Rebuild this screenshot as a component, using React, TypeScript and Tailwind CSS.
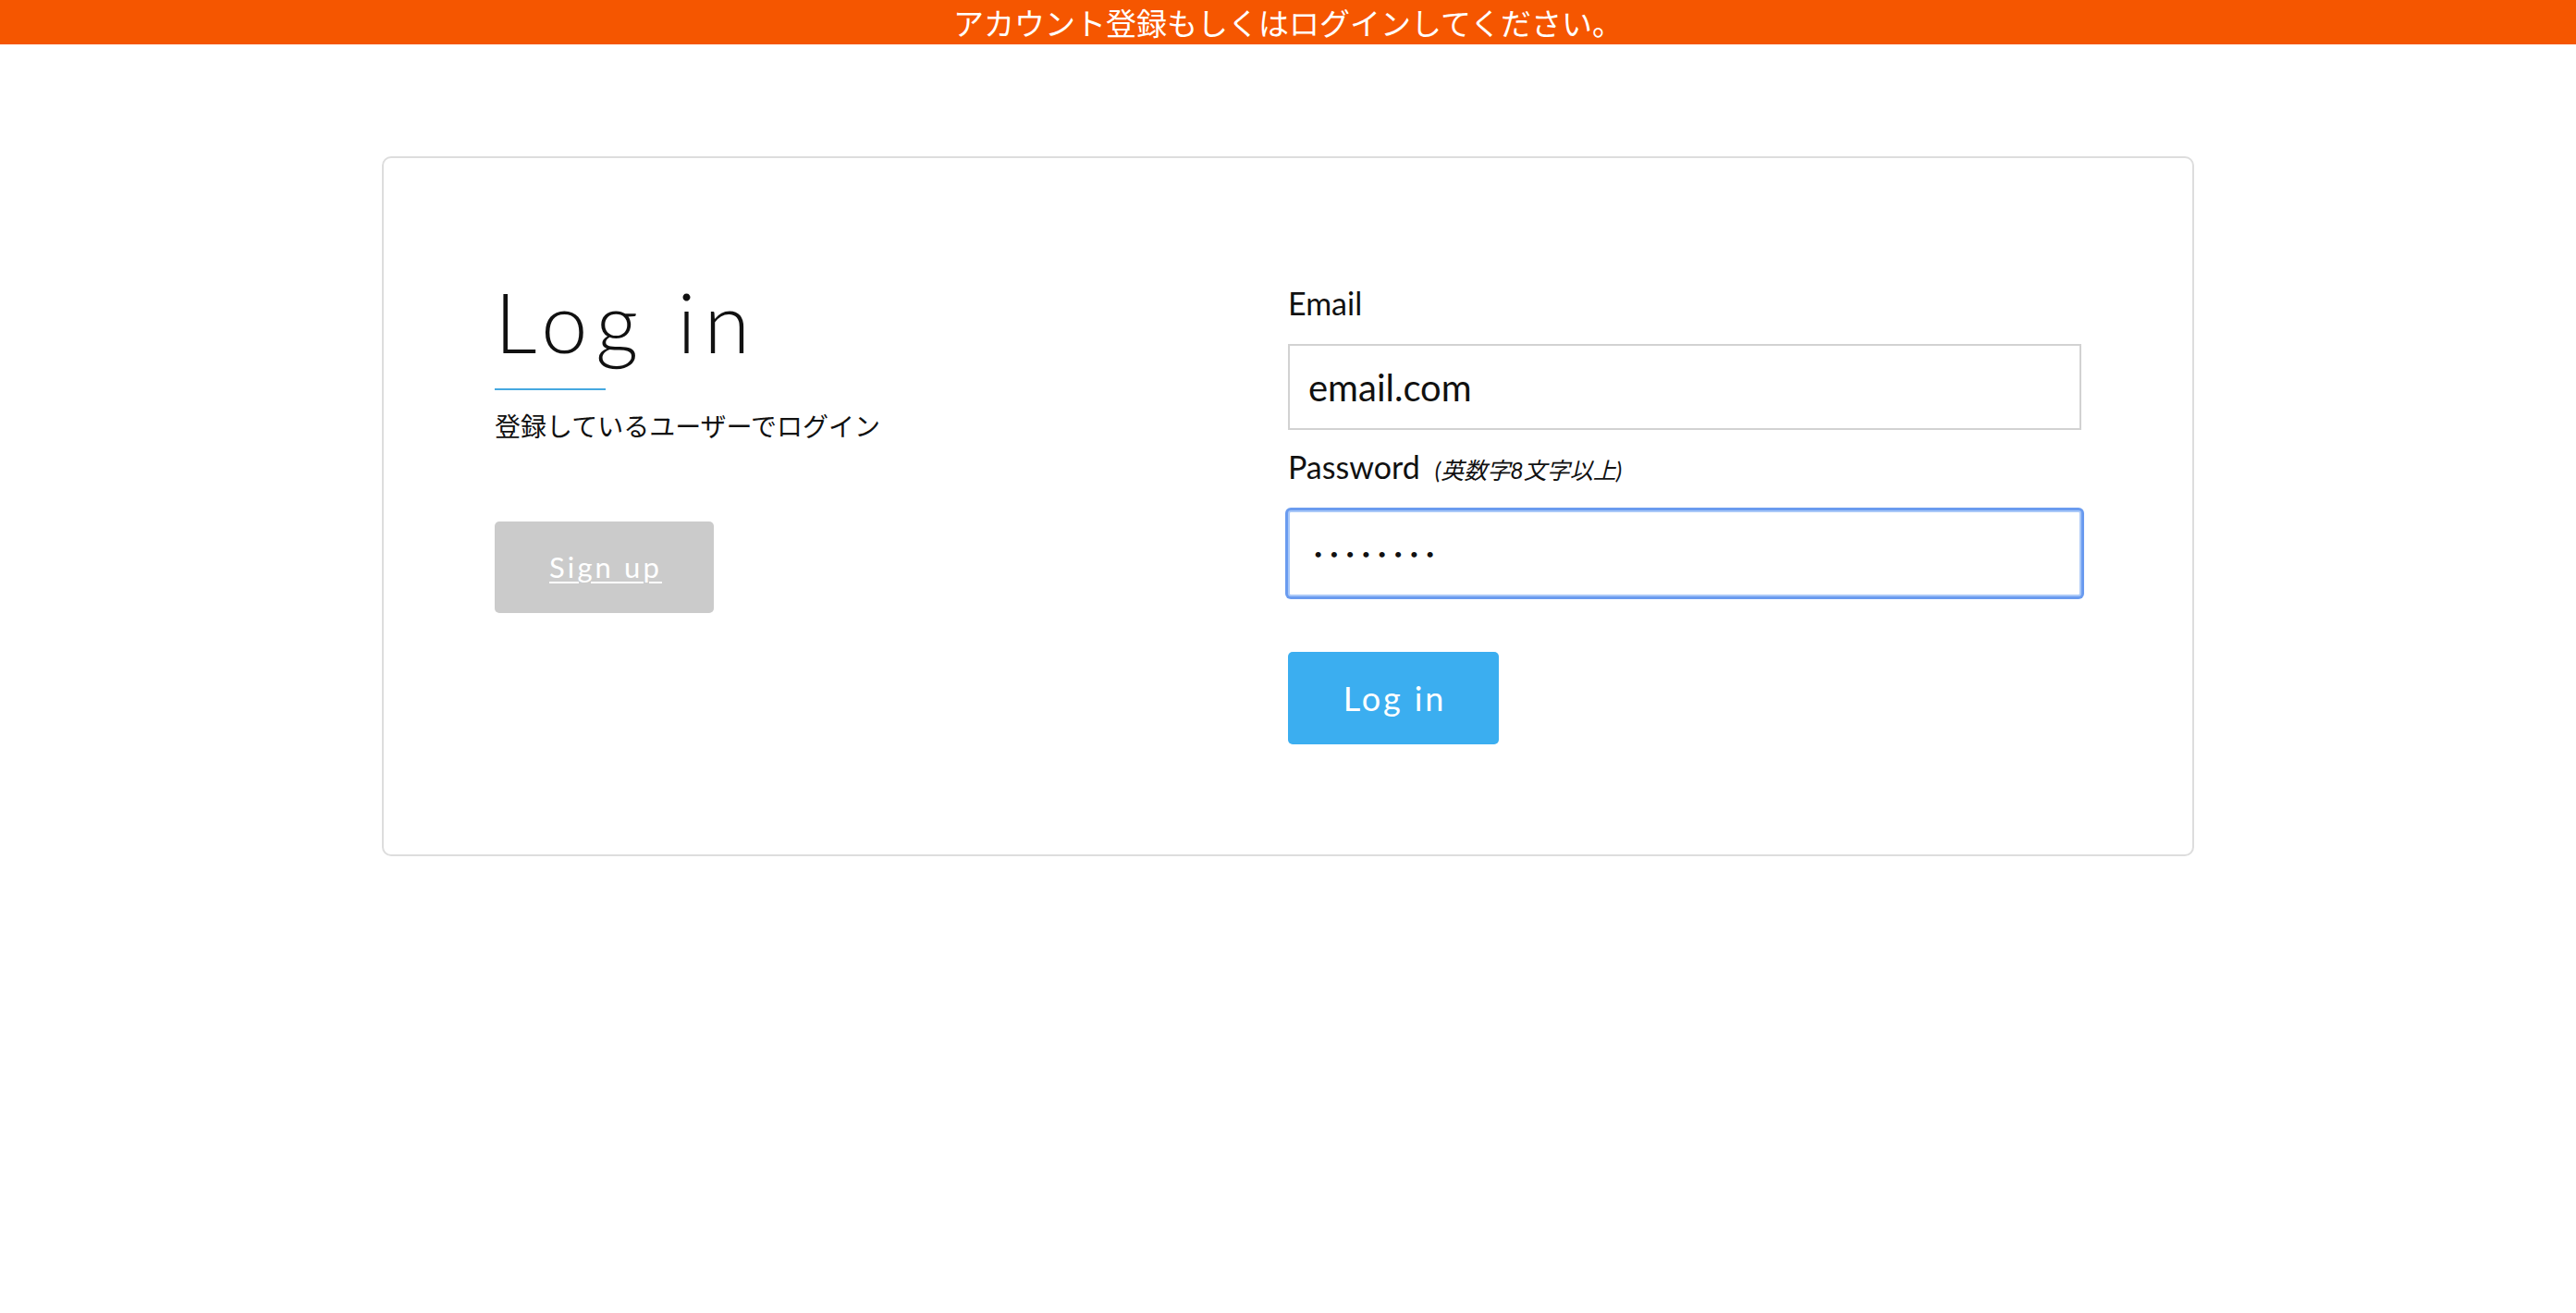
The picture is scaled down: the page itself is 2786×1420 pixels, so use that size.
export default function App() {
  return (
    <div className="min-h-screen bg-white font-['Lato','Noto_Sans_CJK_JP',sans-serif] text-[#111]">
      <div className="flex h-12 items-center justify-center bg-[#f55600]">
        <p className="font-['Noto_Sans_CJK_JP',sans-serif] text-[33px] leading-[48px] text-white">
          アカウント登録もしくはログインしてください。
        </p>
      </div>

      <main className="mx-auto mt-[121px] w-[1960px] rounded-[10px] border-2 border-[#dddddd] px-[120px] pt-[131px] pb-[119px]">
        <div className="grid grid-cols-2">
          <section className="flex flex-col items-start">
            <h1 className="text-[90px] font-light leading-none tracking-[0.1em]">
              Log in
            </h1>
            <div className="mt-[28px] h-[2px] w-[120px] bg-[#45a8e0]" />
            <p className="mt-[18px] font-['Noto_Sans_CJK_JP',sans-serif] text-[28px] leading-[40px]">
              登録しているユーザーでログイン
            </p>
            <a
              href="#"
              className="mt-[84px] flex h-[99px] w-[237px] items-center justify-center rounded-[5px] bg-[#cbcbcb] pl-[3px] text-[31px] tracking-[0.1em] text-white underline decoration-2 underline-offset-[4px]"
            >
              Sign up
            </a>
          </section>

          <form className="flex flex-col items-start">
            <label
              htmlFor="email"
              className="mt-[6px] block text-[34px] leading-[40px]"
            >
              Email
            </label>
            <input
              id="email"
              type="email"
              readOnly
              value="email.com"
              className="mt-[24px] h-[93px] w-full border-2 border-[#d2d2d2] bg-white px-[20px] text-[40px] text-[#111] outline-none"
            />

            <label
              htmlFor="password"
              className="mt-[20px] flex items-baseline gap-[16px] text-[34px] leading-[40px]"
            >
              Password
              <span className="text-[25px] italic">(英数字8文字以上)</span>
            </label>
            <input
              id="password"
              type="password"
              readOnly
              value="password"
              className="mt-[24px] h-[93px] w-full rounded-[3px] border-2 border-[#a9c8f8] bg-white px-[26px] text-[16px] tracking-[8px] text-[#111] shadow-[0_0_0_3px_#6a9bef] outline-none"
            />

            <button
              type="button"
              className="mt-[60px] flex h-[100px] w-[228px] items-center justify-center rounded-[5px] bg-[#3baef0] pl-[3px] text-[36px] tracking-[0.08em] text-white"
            >
              Log in
            </button>
          </form>
        </div>
      </main>
    </div>
  );
}
